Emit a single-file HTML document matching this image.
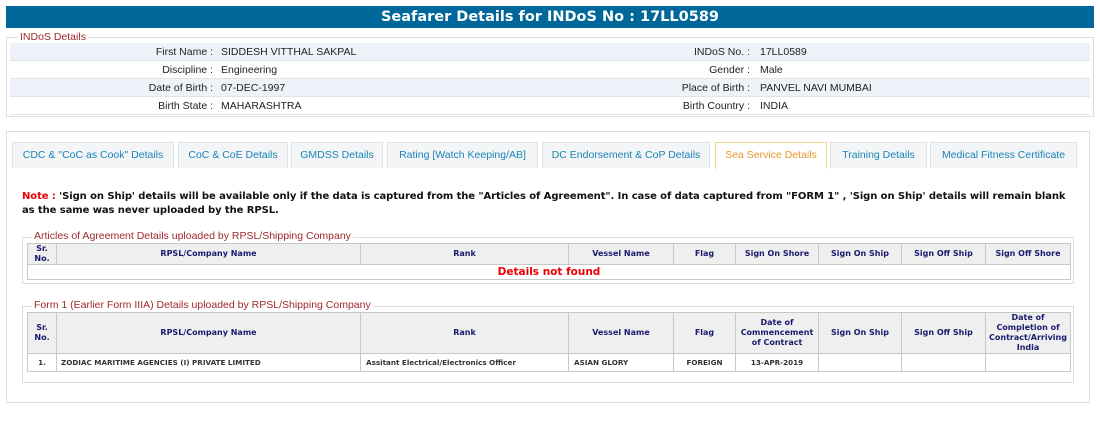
<!DOCTYPE html>
<html><head><meta charset="utf-8"><style>
*{box-sizing:border-box;margin:0;padding:0}
body{width:1100px;height:438px;background:#fff;position:relative;font-family:"Liberation Sans",Arial,sans-serif;overflow:hidden}
.abs{position:absolute}
.hdr{left:6px;top:6px;width:1088px;height:22px;background:#00679a;color:#fff;font:bold 14.5px "DejaVu Sans",sans-serif;text-align:center;line-height:22px}
.fs{border:1px solid #ddd}
.lg{background:#fff;color:#a0282f;font-size:10.5px;padding:0 2px;line-height:12px}
.row{left:10px;width:1080px;height:18px;font-size:10.5px;color:#222;line-height:18px;border-bottom:1px solid #e4e4e4}
.row.a{background:#edf3f9}
.row span{position:absolute}
.l1{right:877px;text-align:right}
.v1{left:211px}
.l2{right:340px;text-align:right}
.v2{left:750px}
.tab{top:142px;height:26px;background:#f3f5f6;border:1px solid #dde3e6;border-bottom:none;color:#1a84b8;font-size:10.5px;line-height:25px;text-align:center}
.tab.act{background:#fff;border-color:#f0d68a;color:#e8952a;height:27px}
.note{left:22px;top:190px;width:1062px;font:bold 10px "DejaVu Sans",sans-serif;line-height:13.5px;color:#111;white-space:nowrap;letter-spacing:-0.085px}
table{border-collapse:collapse;table-layout:fixed;position:absolute;font-family:"DejaVu Sans",sans-serif}
th{background:#efefef;border:1px solid #c8c8c8;color:#1a1a6e;font-size:8px;font-weight:bold;text-align:center;line-height:10px}
td{border:1px solid #c8c8c8;font-size:7.2px;font-weight:bold;color:#333;height:18px}
</style></head><body>
<div class="abs hdr">Seafarer Details for INDoS No : 17LL0589</div>
<div class="abs fs" style="left:6px;top:37px;width:1088px;height:80px"></div>
<div class="abs lg" style="left:18px;top:31px">INDoS Details</div>
<div class="abs row a" style="top:43px"><span class="l1">First Name :</span><span class="v1">SIDDESH VITTHAL SAKPAL</span><span class="l2">INDoS No. :</span><span class="v2">17LL0589</span></div>
<div class="abs row" style="top:61px"><span class="l1">Discipline :</span><span class="v1">Engineering</span><span class="l2">Gender :</span><span class="v2">Male</span></div>
<div class="abs row a" style="top:79px"><span class="l1">Date of Birth :</span><span class="v1">07-DEC-1997</span><span class="l2">Place of Birth :</span><span class="v2">PANVEL NAVI MUMBAI</span></div>
<div class="abs row" style="top:97px"><span class="l1">Birth State :</span><span class="v1">MAHARASHTRA</span><span class="l2">Birth Country :</span><span class="v2">INDIA</span></div>

<div class="abs fs" style="left:6px;top:131px;width:1084px;height:272px"></div>
<div class="abs tab" style="left:12px;width:162px">CDC &amp; "CoC as Cook" Details</div>
<div class="abs tab" style="left:178px;width:110px">CoC &amp; CoE Details</div>
<div class="abs tab" style="left:291px;width:92px">GMDSS Details</div>
<div class="abs tab" style="left:387px;width:151px">Rating [Watch Keeping/AB]</div>
<div class="abs tab" style="left:542px;width:168px">DC Endorsement &amp; CoP Details</div>
<div class="abs tab act" style="left:715px;width:112px">Sea Service Details</div>
<div class="abs tab" style="left:830px;width:97px">Training Details</div>
<div class="abs tab" style="left:930px;width:147px">Medical Fitness Certificate</div>

<div class="abs note"><span style="color:#e00">Note :</span> 'Sign on Ship' details will be available only if the data is captured from the "Articles of Agreement". In case of data captured from "FORM 1" , 'Sign on Ship' details will remain blank<br>as the same was never uploaded by the RPSL.</div>

<div class="abs fs" style="left:22px;top:237px;width:1052px;height:47px"></div>
<div class="abs lg" style="left:32px;top:230px">Articles of Agreement Details uploaded by RPSL/Shipping Company</div>
<table style="left:27px;top:243px;width:1043px">
<colgroup><col style="width:29px"><col style="width:304px"><col style="width:208px"><col style="width:105px"><col style="width:62px"><col style="width:83px"><col style="width:83px"><col style="width:84px"><col style="width:85px"></colgroup>
<tr style="height:21px"><th>Sr.<br>No.</th><th>RPSL/Company Name</th><th>Rank</th><th>Vessel Name</th><th>Flag</th><th>Sign On Shore</th><th>Sign On Ship</th><th>Sign Off Ship</th><th>Sign Off Shore</th></tr>
<tr><td colspan="9" style="height:15px;text-align:center;color:#e00;font-size:10.5px;line-height:13px">Details not found</td></tr>
</table>

<div class="abs fs" style="left:22px;top:306px;width:1052px;height:77px"></div>
<div class="abs lg" style="left:32px;top:299px">Form 1 (Earlier Form IIIA) Details uploaded by RPSL/Shipping Company</div>
<table style="left:27px;top:312px;width:1043px">
<colgroup><col style="width:29px"><col style="width:304px"><col style="width:208px"><col style="width:105px"><col style="width:62px"><col style="width:83px"><col style="width:83px"><col style="width:84px"><col style="width:85px"></colgroup>
<tr style="height:41px"><th>Sr.<br>No.</th><th>RPSL/Company Name</th><th>Rank</th><th>Vessel Name</th><th>Flag</th><th>Date of Commencement of Contract</th><th>Sign On Ship</th><th>Sign Off Ship</th><th>Date of Completion of Contract/Arriving India</th></tr>
<tr><td style="text-align:center">1.</td><td style="padding-left:4px">ZODIAC MARITIME AGENCIES (I) PRIVATE LIMITED</td><td style="padding-left:5px">Assitant Electrical/Electronics Officer</td><td style="padding-left:5px">ASIAN GLORY</td><td style="text-align:center">FOREIGN</td><td style="text-align:center">13-APR-2019</td><td></td><td></td><td></td></tr>
</table>
</body></html>
